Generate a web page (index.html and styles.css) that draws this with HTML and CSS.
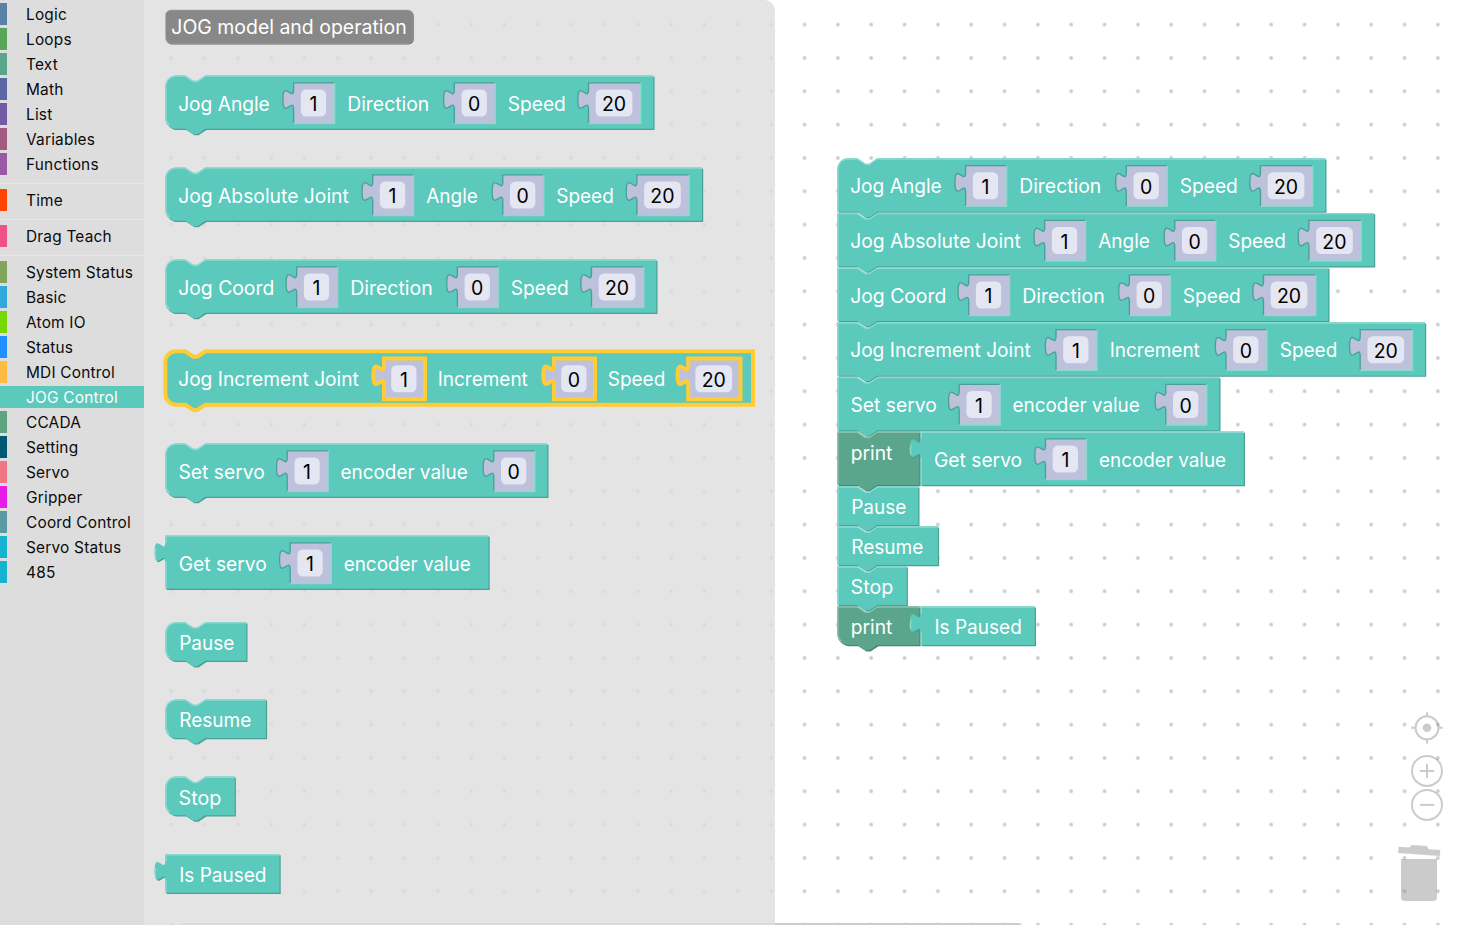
FILE: index.html
```
<!DOCTYPE html>
<html lang="en">
<head>
<meta charset="utf-8">
<title>JOG Control blocks</title>
<link rel="stylesheet" href="styles.css">
</head>
<body>
<div class="editor">
  <nav class="toolbox">
    <div class="row logic"><span>Logic</span></div>
    <div class="row loops"><span>Loops</span></div>
    <div class="row text"><span>Text</span></div>
    <div class="row math"><span>Math</span></div>
    <div class="row list"><span>List</span></div>
    <div class="row variables"><span>Variables</span></div>
    <div class="row functions"><span>Functions</span></div>
    <div class="separator"></div>
    <div class="row time"><span>Time</span></div>
    <div class="separator"></div>
    <div class="row teach"><span>Drag Teach</span></div>
    <div class="separator"></div>
    <div class="row system"><span>System Status</span></div>
    <div class="row basic"><span>Basic</span></div>
    <div class="row atom"><span>Atom IO</span></div>
    <div class="row status"><span>Status</span></div>
    <div class="row mdi"><span>MDI Control</span></div>
    <div class="row jog selected"><span>JOG Control</span></div>
    <div class="row ccada"><span>CCADA</span></div>
    <div class="row setting"><span>Setting</span></div>
    <div class="row servo"><span>Servo</span></div>
    <div class="row gripper"><span>Gripper</span></div>
    <div class="row coord"><span>Coord Control</span></div>
    <div class="row servostatus"><span>Servo Status</span></div>
    <div class="row n485"><span>485</span></div>
  </nav>
  <svg class="workspace" width="1313" height="925" viewBox="144 0 1313 925">
    <defs>
      <pattern id="grid" patternUnits="userSpaceOnUse" x="787.83" y="7.93" width="33.333" height="33.333">
        <circle class="dot" cx="16.7" cy="16.67" r="1.85"/>
      </pattern>
    </defs>
    <rect class="canvas" x="144" width="1313" height="925"/>
    <rect x="144" width="1313" height="925" fill="url(#grid)"/>
    <g id="stack"></g>
    <rect class="scrollbar" x="180" y="923" width="842" height="7" rx="3.5"/>
    <g class="controls">
      <circle class="ring" cx="1427" cy="727.8" r="11.5"/>
      <circle class="solid" cx="1427" cy="727.8" r="4.3"/>
      <path class="ring" d="M1427 712.2v4.1M1427 739.3v4.3M1411.2 727.8h4.3M1438.5 727.8h4.3"/>
      <circle class="ring" cx="1427" cy="770.9" r="15"/>
      <path class="ring" d="M1419.8 770.9h14.4M1427 763.7v14.4"/>
      <circle class="ring" cx="1427" cy="804.9" r="15"/>
      <path class="ring" d="M1419.8 804.9h14.4"/>
      <path class="solid" d="M1401 859h36v38a4 4 0 0 1-4 4h-28a4 4 0 0 1-4-4z"/>
      <path class="solid" d="M1398.7 846.7l10.8.9 2.2-2.7 15 1.1 2.2 3.2 11.4.9-.6 6-41.7-3.2z"/>
    </g>
    <path class="flyout" d="M144 0H764.3A10.7 10.7 0 0 1 775 10.7V925H144z"/>
    <rect class="label-dark" x="166.3" y="11" width="247.6" height="33.4" rx="5.3"/>
    <rect class="label-bg" x="165.6" y="10" width="247.6" height="33.4" rx="5.3"/>
    <text class="caption" x="171.3" y="34.3" textLength="235.4" lengthAdjust="spacingAndGlyphs">JOG model and operation</text>
    <g id="palette"></g>
  </svg>
</div>
<script src="blocks.js"></script>
</body>
</html>
```
FILE: styles.css
```
body {
  margin: 0;
  overflow: hidden;
  background: #fff;
  font-family: Inter, "Liberation Sans", sans-serif;
}

.editor {
  display: flex;
  width: 1457px;
  height: 925px;
}

.toolbox {
  display: flex;
  flex-direction: column;
  box-sizing: border-box;
  flex: none;
  width: 144px;
  padding-top: 3px;
  background: #ddd;
}

.row {
  height: 22px;
  margin-bottom: 3px;
  padding-left: 19px;
  border-left: 7px solid;
  line-height: 24px;
  font-size: 15.4px;
  letter-spacing: 0.22px;
  white-space: nowrap;
}

.row span { color: #0b0b0b; }

.separator {
  height: 0;
  margin: 5px 0;
  border-bottom: 1px solid #e8e8e8;
}

.logic { border-color: #5b80a5; }
.loops { border-color: #5ba55b; }
.text { border-color: #5ba58c; }
.math { border-color: #5b67a5; }
.list { border-color: #745ba5; }
.variables { border-color: #a55b80; }
.functions { border-color: #995ba5; }
.time { border-color: #ff4500; }
.teach { border-color: #f05285; }
.system { border-color: #80a55b; }
.basic { border-color: #30a8de; }
.atom { border-color: #77d700; }
.status { border-color: #1e90ff; }
.mdi { border-color: #ffbb44; }
.jog { border-color: #5bc9bb; }
.ccada { border-color: #5ba580; }
.setting { border-color: #005874; }
.servo { border-color: #f07585; }
.gripper { border-color: #e81ae8; }
.coord { border-color: #5b99a5; }
.servostatus, .n485 { border-color: #14b4ce; }
.selected { background: #5bc9bb; }
.row.selected span { color: #fff; }

.workspace { display: block; flex: none; }
.canvas { fill: #fff; }
.dot { fill: #ccc; }
.scrollbar { fill: #ccc; }
.controls { opacity: 0.43; }
.ring { fill: none; stroke: #898989; stroke-width: 2; }
.solid { fill: #898989; }
.flyout { fill: #ddd; fill-opacity: 0.8; }
.label-dark { fill: #666; }
.label-bg { fill: #888; stroke: #aaa; stroke-width: 0.6; }

.caption, .label, .value { font-size: 19.5px; }
.caption, .label { fill: #fff; }
.value { fill: #000; text-anchor: middle; }

.jog-main { fill: #5bc9bb; }
.jog-dark { fill: #49a196; }
.jog-light { stroke: #8cd9cf; }
.print-main { fill: #5ba58c; }
.print-dark { fill: #498470; }
.print-light { stroke: #8cc0ae; }
.jog-light, .print-light { fill: none; stroke-width: 1.33; stroke-linecap: round; }
.picked { fill: #5bc9bb; stroke: #fc3; stroke-width: 4; }
.socket { fill: #bdc1db; }
.socket-dark { fill: none; stroke: #49a196; stroke-width: 1.33; }
.socket-light { fill: none; stroke: #8cd9cf; stroke-width: 1.33; }
.socket-picked { fill: none; stroke: #fc3; stroke-width: 4; }
.field { fill: #e4e6f1; }
```
FILE: blocks.js
```
// One block unit in pixels at the current zoom level.
const U = 4 / 3;

// Each definition is laid out from a block whose left edge is LEFT.
const LEFT = 165.3;
const DEFS = {
  angle:  { h: 40, end: 653.3, labels: [['Jog Angle', 179, 269], ['Direction', 348, 428.5], ['Speed', 508.5, 565]], inputs: [[293.6, '1'], [454.3, '0'], [588.5, '20']] },
  joint:  { h: 40, end: 702, labels: [['Jog Absolute Joint', 179, 348], ['Angle', 427, 477], ['Speed', 557, 613]], inputs: [[372.7, '1'], [502.8, '0'], [636.9, '20']] },
  coord:  { h: 40, end: 656.3, labels: [['Jog Coord', 179, 273.5], ['Direction', 351, 432], ['Speed', 511.5, 568]], inputs: [[296.7, '1'], [457.4, '0'], [591.5, '20']] },
  incr:   { h: 40, end: 753, labels: [['Jog Increment Joint', 179, 358], ['Increment', 438.5, 527], ['Speed', 608.5, 664.5]], inputs: [[384, '1'], [554, '0'], [688.2, '20']] },
  setEnc: { h: 40, end: 547.3, labels: [['Set servo', 179.3, 264], ['encoder value', 341.3, 467]], inputs: [[287.2, '1'], [493.8, '0']] },
  getEnc: { h: 40, end: 488.5, output: true, labels: [['Get servo', 179.5, 266], ['encoder value', 344.5, 470]], inputs: [[290.2, '1']] },
  pause:  { h: 29, end: 246.3, labels: [['Pause', 180, 233.5]] },
  resume: { h: 29, end: 265.9, labels: [['Resume', 180, 250.5]] },
  stop:   { h: 29, end: 234.7, labels: [['Stop', 179.3, 220.5]] },
  paused: { h: 29, end: 279.5, output: true, labels: [['Is Paused', 180, 265.7]] },
  print:  { h: 29, end: 247.5, tone: 'print', labels: [['print', 179.5, 219.5]] },
  printTall: { h: 40, end: 247.5, tone: 'print', labels: [['print', 179.5, 219.5]], labelY: 28 }
};

const tabDown = `c0 ${10 * U} ${-8 * U} ${-8 * U} ${-8 * U} ${7.5 * U}s${8 * U} ${-2.5 * U} ${8 * U} ${7.5 * U}`;
const tabUp = `c0 ${-10 * U} ${-8 * U} ${8 * U} ${-8 * U} ${-7.5 * U}s${8 * U} ${2.5 * U} ${8 * U} ${-7.5 * U}`;
const notch = `l${6 * U} ${4 * U}h${3 * U}l${6 * U} ${-4 * U}`;

function outline(w, h, o) {
  if (o.output) return `M0 0H${w}V${h}H0V${20 * U}${tabUp}z`;
  const r = 8 * U;
  const top = o.first ? `M0 ${r}A${r} ${r} 0 0 1 ${r} 0H${15 * U}` : `M0 0H${15 * U}`;
  const low = o.last ? `H${r}A${r} ${r} 0 0 1 0 ${h - r}z` : 'H0z';
  return `${top}${notch}H${w}V${h}H${30 * U}l${-6 * U} ${4 * U}h${-3 * U}l${-6 * U} ${-4 * U}${low}`;
}

function highlight(w, h, o) {
  const r = 8 * U, e = 0.67;
  if (o.output) return `M${w - e} ${e}H${e}V${5 * U}M${e} ${20 * U}V${h - e}M${-8 * U + 1} ${17 * U}q-1.2 -5.5 0.3 -8.6`;
  const left = o.last ? `M3.8 ${h - 3.8}A${r} ${r} 0 0 1 ${e} ${h - r}` : `M${e} ${h - e}`;
  const top = o.first ? `V${r}A${r - e} ${r - e} 0 0 1 ${r} ${e}` : `V${e}`;
  return `${left}${top}H${15 * U}${notch}H${w - e}`;
}

function input([x, value], picked) {
  const left = x - LEFT, top = 7.3, wide = value.length > 1;
  const w = wide ? 52.3 : 41, fw = wide ? 36.7 : 25.3, h = 40.7;
  const side = `v${5 * U}${tabDown}V${top + h}`;
  const start = `M${left} ${top}`;
  const edges = picked
    ? `<path class="socket-picked" d="${start}${side}h${w}V${top}z"/>`
    : `<path class="socket-dark" d="M${left + w} ${top}H${left}${side}"/><path class="socket-light" d="M${left} ${top + h}h${w}V${top}"/>`;
  return `<path class="socket" d="${start}${side}h${w}V${top}z"/>${edges}` +
    `<rect class="field" x="${left + 7.2}" y="14" width="${fw}" height="27" rx="5.33"/>` +
    `<text class="value" x="${left + 7.2 + fw / 2}" y="35.5">${value}</text>`;
}

function block(name, x, y, o = {}) {
  const d = DEFS[name], w = d.end - LEFT, h = d.h * U, tone = d.tone || 'jog';
  const shape = outline(w, h, { ...o, output: d.output });
  const body = o.picked
    ? `<path class="picked" d="${shape}"/>`
    : `<path class="${tone}-dark" transform="translate(1.2 1.2)" d="${shape}"/><path class="${tone}-main" d="${shape}"/>` +
      `<path class="${tone}-light" d="${highlight(w, h, { ...o, output: d.output })}"/>`;
  const baseline = d.labelY || (d.h === 40 ? 35.2 : 28);
  const labels = d.labels.map(([t, a, b]) =>
    `<text class="label" x="${a - 0.8 - LEFT}" y="${baseline}" textLength="${b - a + 1.6}" lengthAdjust="spacingAndGlyphs">${t}</text>`).join('');
  const inputs = (d.inputs || []).map(i => input(i, o.picked)).join('');
  return `<g transform="translate(${x} ${y})">${body}${inputs}${labels}</g>`;
}

const single = { first: true, last: true };
document.getElementById('palette').innerHTML = [
  block('angle', LEFT, 75.5, single),
  block('joint', LEFT, 167.5, single),
  block('coord', LEFT, 259.5, single),
  block('incr', LEFT, 351.3, { ...single, picked: true }),
  block('setEnc', LEFT, 443.5, single),
  block('getEnc', LEFT, 535.5),
  block('pause', LEFT, 622.2, single),
  block('resume', LEFT, 699.4, single),
  block('stop', LEFT, 776.6, single),
  block('paused', LEFT, 854.1)
].join('');

const SX = 837.3;
document.getElementById('stack').innerHTML = [
  block('angle', SX, 158.3, { first: true }),
  block('joint', SX, 213),
  block('coord', SX, 267.6),
  block('incr', SX, 322.3),
  block('setEnc', SX, 377),
  block('printTall', SX, 431.6),
  block('getEnc', SX + 83.3, 431.6),
  block('pause', SX, 486.3),
  block('resume', SX, 526.3),
  block('stop', SX, 566.3),
  block('print', SX, 606.3, { last: true }),
  block('paused', SX + 83.3, 606.3)
].join('');
```
